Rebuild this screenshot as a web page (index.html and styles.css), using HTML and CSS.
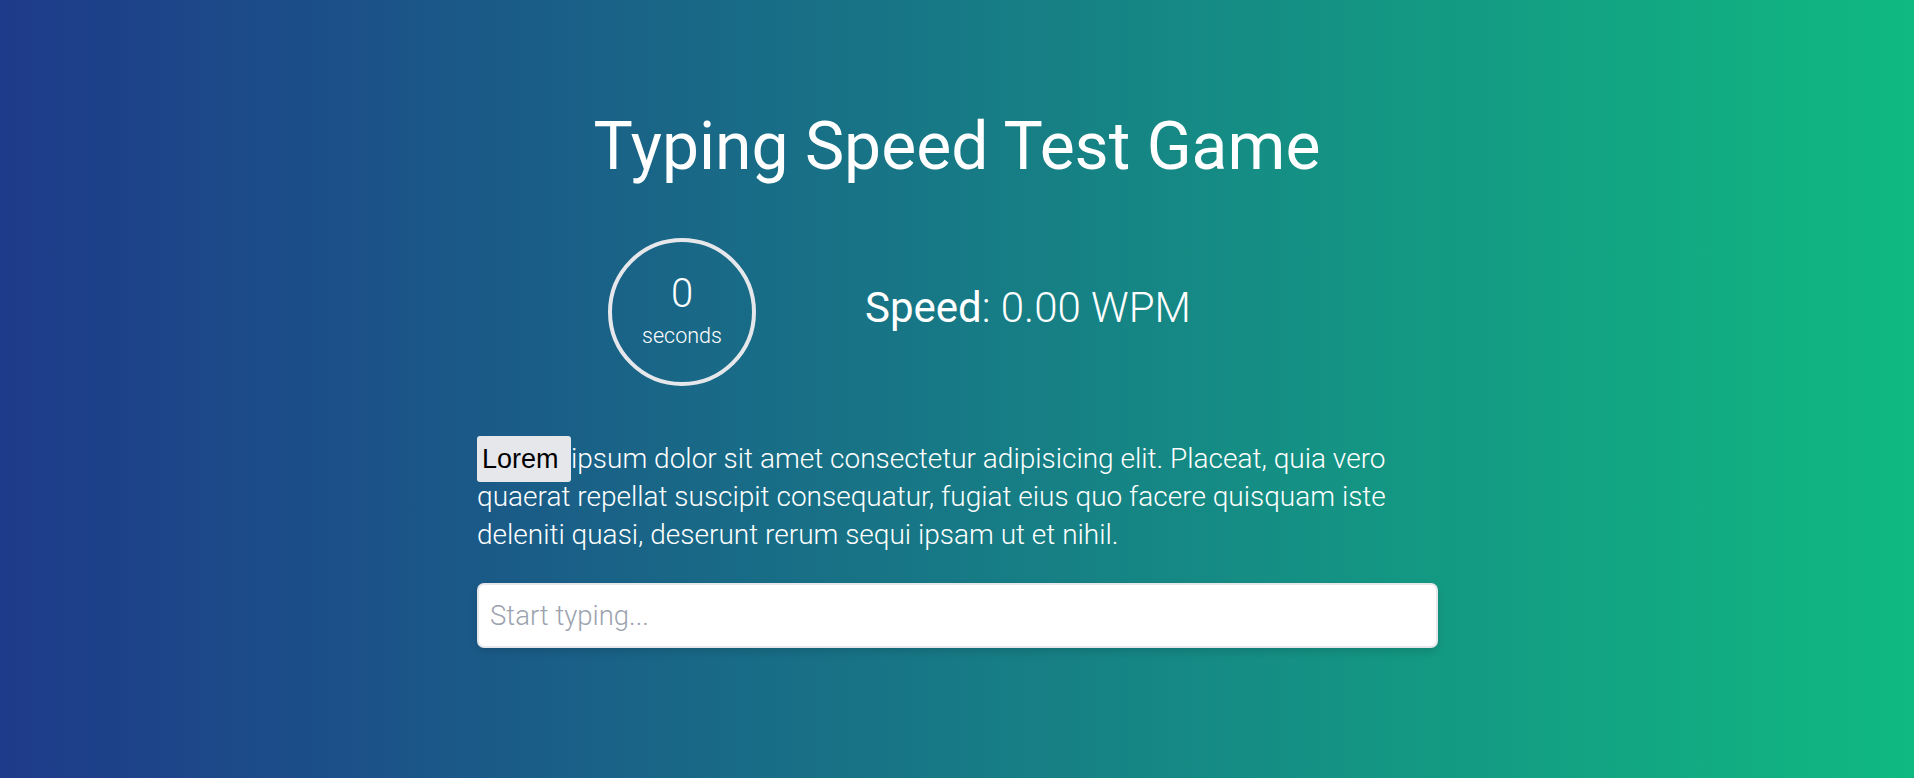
FILE: index.html
```html
<!DOCTYPE html>
<html lang="en">
<head>
<meta charset="utf-8">
<title>Typing Speed Test Game</title>
<link rel="stylesheet" href="styles.css">
</head>
<body>
<main class="page">
  <div class="container">
    <h1 class="title">Typing Speed Test Game</h1>
    <div class="stats">
      <div class="timer">
        <span class="timer-value">0</span>
        <span class="timer-label">seconds</span>
      </div>
      <div class="speed"><span class="speed-label">Speed</span>: 0.00 WPM</div>
    </div>
    <p class="quote"><span class="current">Lorem </span>ipsum dolor sit amet consectetur adipisicing elit. Placeat, quia vero quaerat repellat suscipit consequatur, fugiat eius quo facere quisquam iste deleniti quasi, deserunt rerum sequi ipsam ut et nihil.</p>
    <input class="typing-input" type="text" placeholder="Start typing...">
  </div>
</main>
</body>
</html>
```

FILE: styles.css
```css
* { box-sizing: border-box; }
html, body { margin: 0; padding: 0; }
body {
  min-height: 100vh;
  background: linear-gradient(to right, #1e3a8a, #10b981);
  font-family: Roboto, "Noto Sans", sans-serif;
  color: #ffffff;
}
.page {
  min-height: 100vh;
}
.container {
  width: 960px;
  margin: 0 auto;
  padding-top: 107px;
}
.title {
  margin: 0;
  text-align: center;
  font-size: 66px;
  line-height: 79px;
  font-weight: 400;
}
.stats {
  display: flex;
  align-items: center;
  gap: 109px;
  margin-top: 52px;
  padding-left: 131px;
}
.timer {
  width: 148px;
  height: 148px;
  border: 4px solid #e5e7eb;
  border-radius: 50%;
  display: flex;
  flex-direction: column;
  align-items: center;
  justify-content: center;
}
.timer-value {
  font-size: 40px;
  line-height: 44px;
  font-weight: 300;
  margin-top: -2px;
}
.timer-label {
  font-size: 21.5px;
  line-height: 28px;
  font-weight: 300;
  margin-top: 6px;
}
.speed {
  font-size: 42px;
  font-weight: 300;
  line-height: 50px;
  margin-top: -8px;
}
.speed-label {
  font-weight: 400;
}
.quote {
  margin: 54px 0 0;
  font-size: 28px;
  line-height: 38px;
  font-weight: 300;
}
.current {
  background: #e5e7eb;
  color: #000000;
  font-family: "Liberation Sans", Arial, sans-serif;
  font-weight: 400;
  font-size: 27px;
  padding: 8px 5px;
  border-radius: 3px;
}
.typing-input {
  display: block;
  width: 961px;
  height: 65px;
  margin-top: 29px;
  padding: 0 11px;
  border: 2px solid #e5e7eb;
  border-radius: 7px;
  background: #ffffff;
  box-shadow: 0 4px 8px rgba(0, 0, 0, 0.12);
  font-family: Roboto, "Noto Sans", sans-serif;
  font-size: 27.5px;
  font-weight: 300;
  color: #111827;
  outline: none;
}
.typing-input::placeholder {
  color: #9ca3af;
}
```
